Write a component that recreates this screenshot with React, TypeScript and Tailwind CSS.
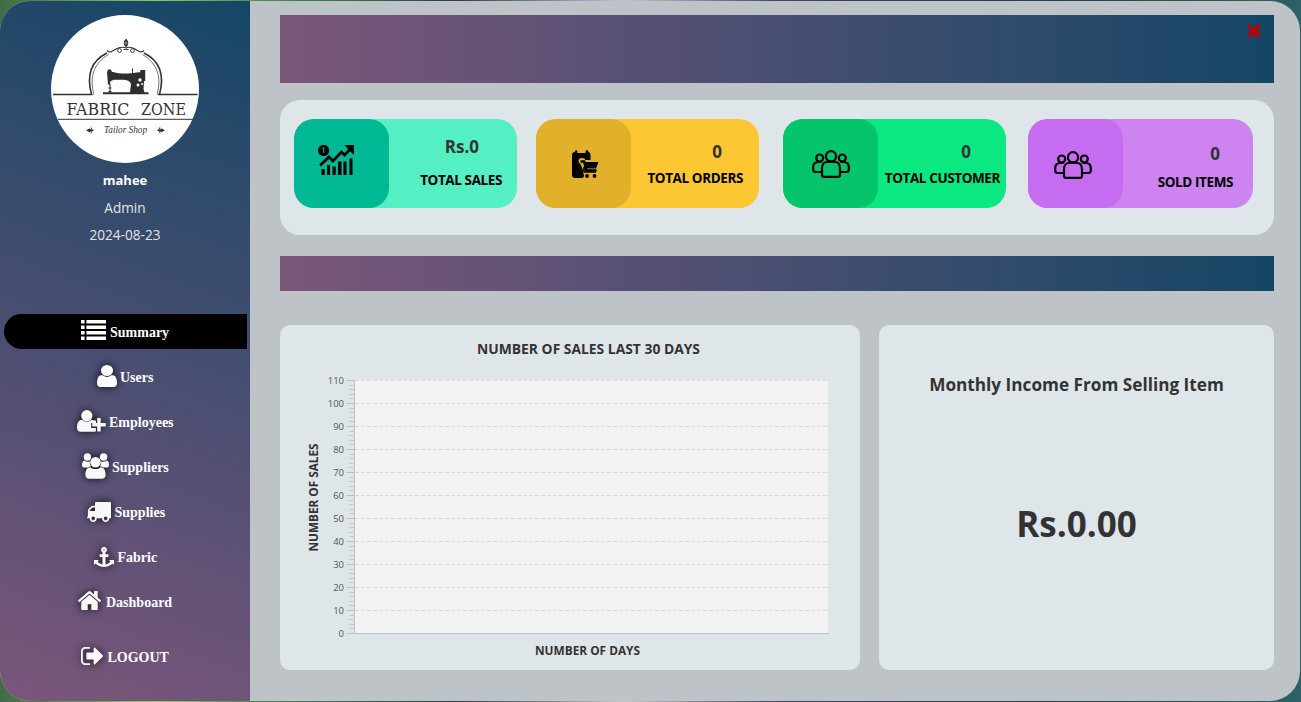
import React from "react";

const USER =
  "M1536 1399q0 109-62.5 187t-150.5 78h-854q-88 0-150.5-78t-62.5-187q0-85 8.5-160.5t31.5-152 58.5-131 94-89 134.5-34.5q131 128 313 128t313-128q76 0 134.5 34.5t94 89 58.5 131 31.5 152 8.5 160.5zm-256-887q0 159-112.5 271.5t-271.5 112.5-271.5-112.5-112.5-271.5 112.5-271.5 271.5-112.5 271.5 112.5 112.5 271.5z";
const ANCHOR =
  "M960 256q0-26-19-45t-45-19-45 19-19 45 19 45 45 19 45-19 19-45zm800 928v352q0 22-20 30-8 2-12 2-13 0-23-9l-93-93q-119 143-318.5 226.5t-397.5 83.5-397.5-83.5-318.5-226.500l-93 93q-9 9-23 9-4 0-12-2-20-8-20-30v-352q0-14 9-23t23-9h352q22 0 30 20 8 19-7 35l-100 100q67 91 189.5 153.500t239.500 82.500v-647h-192q-26 0-45-19t-19-45v-128q0-26 19-45t45-19h192v-163q-58-34-93-92.500t-35-128.500q0-106 75-181t181-75 181 75 75 181q0 70-35 128.500t-93 92.500v163h192q26 0 45 19t19 45v128q0 26-19 45t-45 19h-192v647q149-20 239.500-82.500t189.500-153.500l-100-100q-15-16-7-35 8-20 30-20h352q14 0 23 9t9 23z";
const HOME =
  "M1472 992v480q0 26-19 45t-45 19h-384v-384h-256v384h-384q-26 0-45-19t-19-45v-480q0-1 .5-3t.5-3l575-474 575 474q1 2 1 6zm223-69l-62 74q-8 9-21 11h-3q-13 0-21-7l-692-577-692 577q-12 8-24 7-13-2-21-11l-62-74q-8-10-7-23.500t11-21.500l719-599q32-26 76-26t76 26l244 204v-195q0-14 9-23t23-9h192q14 0 23 9t9 23v408l219 182q10 8 11 21.500t-7 23.500z";
const LOGOUT =
  "M704 1440q0 4 1 20t.5 26.5-3 23.5-10 19.500-20.500 6.500h-320q-119 0-203.500-84.500t-84.500-203.500v-704q0-119 84.500-203.500t203.500-84.500h320q13 0 22.500 9.500t9.500 22.500q0 4 1 20t.5 26.500-3 23.500-10 19.500-20.500 6.500h-320q-66 0-113 47t-47 113v704q0 66 47 113t113 47h312l11.500 1 11.500 3 8 5.500 7 9 2 13.500zm928-544q0 26-19 45l-544 544q-19 19-45 19t-45-19-19-45v-288h-448q-26 0-45-19t-19-45v-384q0-26 19-45t45-19h448v-288q0-26 19-45t45-19 45 19l544 544q19 19 19 45z";
const TRUCK =
  "M640 1408q0-52-38-90t-90-38-90 38-38 90 38 90 90 38 90-38 38-90zm-384-512h384v-256h-158q-13 0-22 9l-195 195q-9 9-9 22v30zm1280 512q0-52-38-90t-90-38-90 38-38 90 38 90 90 38 90-38 38-90zm256-1088v1024q0 15-4 26.500t-13.500 18.500-16.500 11.500-23.500 6-22.500 2-25.500 0-22.500-.5q0 106-75 181t-181 75-181-75-75-181h-384q0 106-75 181t-181 75-181-75-75-181h-64q-3 0-22.500.5t-25.500 0-22.500-2-23.500-6-16.500-11.500-13.500-18.500-4-26.500q0-26 19-45t45-19v-320q0-8-.5-35t0-38 2.500-34.500 6.500-37 14-30.500 22.500-30l198-198q19-19 50.500-32t58.500-13h160v-192q0-26 19-45t45-19h1024q26 0 45 19t19 45z";

const shadow = "block shrink-0 overflow-visible drop-shadow-[0_0_4px_rgba(0,0,0,0.85)]";

function SummaryIcon() {
  return (
    <svg className="block shrink-0" width="25" height="20" fill="#fff">
      {[0, 5.5, 11, 16.5].map((y) => (
        <g key={y}>
          <rect x="0" y={y} width="3.6" height="3.5" />
          <rect x="5.4" y={y} width="19.600" height="3.5" />
        </g>
      ))}
    </svg>
  );
}

function UsersIcon() {
  return (
    <svg className={shadow} width="20" height="22" viewBox="256 128 1280 1536" preserveAspectRatio="none" fill="#fff">
      <path d={USER} />
    </svg>
  );
}

function EmployeesIcon() {
  return (
    <svg className={shadow} width="29" height="22" viewBox="0 0 29 22" fill="#f8f8f8">
      <circle cx="9.8" cy="5.7" r="5.6" />
      <path d="M5 9.700c3 2.500 6.600 2.500 9.600 0 1 0 1.800.3 2.500.8h1.900v2.600h-4.800v5h4.700v3.200c-.5.3-1 .4-1.700.4H3.800C1.500 21.700 0 20.200 0 17.900c0-4 1.200-8.200 5-8.200z" />
      <path d="M20.200 8h3.500v5h5.100v3.500h-5.100v5h-3.500v-5h-5V13h5z" />
    </svg>
  );
}

function SuppliersIcon() {
  return (
    <svg className={shadow} width="27" height="26" viewBox="0 0 27 26" fill="#f8f8f8">
      <circle cx="5.400" cy="4" r="3.700" />
      <circle cx="21.600" cy="4" r="3.700" />
      <path d="M2.300 7.500c1.800 1.500 4 1.600 5.600.7-.3 2.100.2 3.700 1.200 5.100-1.300.1-2.500.5-3.400 1.300H2.600C1 14.600 0 13.800 0 12.300c0-2 .5-4.600 2.300-4.800z" />
      <path d="M24.700 7.500c-1.800 1.500-4 1.600-5.600.7.3 2.100-.2 3.700-1.200 5.100 1.300.1 2.500.5 3.400 1.300h3.100c1.600 0 2.600-.8 2.600-2.300 0-2-.5-4.600-2.300-4.800z" />
      <circle cx="13.500" cy="9.200" r="5.300" />
      <path d="M8.400 14.200c3 2.500 7.200 2.500 10.200 0 4 0 5 4 5 7.700 0 2.300-1.500 3.900-3.800 3.900H7.200c-2.300 0-3.800-1.600-3.800-3.900 0-3.700 1-7.700 5-7.700z" />
    </svg>
  );
}

function SuppliesIcon() {
  return (
    <svg className={shadow} width="24" height="20" viewBox="64 256 1728 1408" preserveAspectRatio="none" fill="#f8f8f8">
      <path d={TRUCK} />
    </svg>
  );
}

function FabricIcon() {
  return (
    <svg className={shadow} width="20" height="20" viewBox="32 0 1728 1776" preserveAspectRatio="none" fill="#f8f8f8">
      <path d={ANCHOR} />
    </svg>
  );
}

function HomeIcon() {
  return (
    <svg className={shadow} width="23" height="19" viewBox="89 250 1614 1286" preserveAspectRatio="none" fill="#f8f8f8">
      <path d={HOME} />
    </svg>
  );
}

function LogoutIcon() {
  return (
    <svg className={shadow} width="22" height="18" viewBox="64 256 1568 1280" preserveAspectRatio="none" fill="#f8f8f8">
      <path d={LOGOUT} />
    </svg>
  );
}

function Logo() {
  return (
    <svg className="block" width="148" height="148" viewBox="0 0 148 148">
      <circle cx="74" cy="74" r="74" fill="#fff" />
      <g fill="none" stroke="#333">
        <path d="M2 79.500h39.500M107 79.500H146.500" strokeWidth="1.300" />
        <path d="M7 104.300h135" strokeWidth="1" />
        <path d="M40.500 79.500C35.500 61 40 46 56 38M108.500 79.500C113.500 61 109 46 93 38" strokeWidth="1.600" />
        <path d="M43 79.500C38 62 43 48 57.500 39.500M106 79.500C111 62 106 48 91.500 39.500" strokeWidth=".7" />
        <path d="M56 35.500c4 4 7-1.500 12-2.800 4-1 7 .3 7 .3s2-1.300 6-.3c5 1.300 8 6.800 12 2.800" strokeWidth="1.100" />
        <circle cx="68.500" cy="35.500" r="1.900" strokeWidth="1" />
        <circle cx="81.500" cy="35.500" r="1.900" strokeWidth="1" />
        <path d="M75 24.500c-3 3-2 5 0 7 2-2 3-4 0-7zM75 26v6M72.500 34.500h5" strokeWidth="1.200" />
        <path d="M81.500 53.500v5M59 69v9M57.500 73h3M57.500 76.500h3" strokeWidth="1.100" />
      </g>
      <path
        fill="#2e2e2e"
        d="M52 77.300h27l1-8.300c-1-3-4-4.200-8-4.200H63c-1.500 0-2 1.300-3.500 1.300l-.5 3.500h-2l-1-12 1-3.200h3l.8 2.300c8 2.500 17 2.300 24.500.8l3.700-.3.500-2.200h4.700v11h-1.200l-.5 8 1 3.300H97.500v2H52z"
      />
      <circle cx="89" cy="65" r="1.700" fill="#fff" />
      <circle cx="87" cy="70" r="1.500" fill="#fff" />
      <circle cx="91" cy="69" r="1" fill="#fff" />
      <g fill="#333" fontSize="17.500" className="font-['DejaVu_Serif',serif]">
        <text x="15.500" y="100" textLength="63" lengthAdjust="spacingAndGlyphs">
          FABRIC
        </text>
        <text x="90" y="100" textLength="45" lengthAdjust="spacingAndGlyphs">
          ZONE
        </text>
      </g>
      <text
        x="53"
        y="117.500"
        textLength="43"
        lengthAdjust="spacingAndGlyphs"
        fill="#333"
        fontSize="9.500"
        className="font-['Liberation_Serif',serif] italic"
      >
        Tailor Shop
      </text>
      <g fill="#333">
        <path d="M35 115.300l4-2 1 1.500h2.500v1.200H40l-1 1.500zM39.500 111l2.500 4-2.500 4.500 1-4.500z" />
        <path d="M114 115.300l-4-2-1 1.500h-2.500v1.200h2.500l1 1.500zM109.500 111l-2.500 4 2.500 4.500-1-4.500z" />
      </g>
    </svg>
  );
}

function SalesIcon() {
  return (
    <svg className="block" width="36" height="32" viewBox="0 0 36 32">
      <circle cx="5.600" cy="5.500" r="5.600" />
      <path d="M4.500 4l1.300-.9V8" stroke="#00b894" strokeWidth="1.100" fill="none" />
      <path d="M2 20.500l9-8.500 4 4 8.500-9 3 3L33 3.500" fill="none" stroke="#000" strokeWidth="2.800" />
      <path d="M26.500 0H36v10l-3-3-3.500-3.500z" />
      <path d="M3.500 24h3.200v6H3.500zM9 20h3v10H9zM14.500 21.500h3.200V30h-3.200zM20 16.500h3.500V30H20zM25.500 16.500h3V30h-3zM31.500 13.500h3V30h-3z" />
    </svg>
  );
}

function OrdersIcon() {
  return (
    <svg className="block" width="27" height="29" viewBox="0 0 27 29">
      <path d="M0 5Q0 2 3 2Q3 0 4.200 0Q5.500 0 5.500 3h8Q13.500 0 15 0Q16 0 16.500 2Q18.500 2.500 18.500 5v5h-5Q13 8 10 8Q6.500 8 6.500 11Q6.500 13 8.500 14L11 20v3l1 1.500Q12 28 10 28H3Q0 28 0 25z" />
      <path d="M9.500 11.500h2.600l2.300 9h9.200" stroke="#000" strokeWidth="2.500" fill="none" strokeLinecap="round" />
      <path d="M12.500 12H26.500l-2.500 6.500h-9.700z" />
      <path d="M12 17v5h12" stroke="#000" strokeWidth="1.600" fill="none" />
      <circle cx="15" cy="26" r="1.900" />
      <circle cx="22.500" cy="26" r="1.900" />
    </svg>
  );
}

function PeopleIcon() {
  return (
    <svg className="block" width="38" height="28" viewBox="0 0 38 28" fill="none" stroke="#000" strokeWidth="2.200">
      <circle cx="19" cy="6.300" r="5.100" />
      <circle cx="7.700" cy="8" r="3.500" />
      <circle cx="30.300" cy="8" r="3.500" />
      <path d="M10 24.500v-6q0-6.500 5-6.500h8q5 0 5 6.500v6q0 2.400-2 2.400H12q-2 0-2-2.400z" />
      <path d="M9.500 12H6.500Q1.200 12 1.200 17V19.500q0 2.500 2.500 2.500h6M28.500 12h3Q36.800 12 36.800 17V19.500q0 2.500-2.500 2.500h-6" />
    </svg>
  );
}

const nav = [
  { label: "Summary", icon: <SummaryIcon />, item: "bg-black gap-1 pr-px", pad: "pb-[3px]", text: "w-[59px]" },
  { label: "Users", icon: <UsersIcon />, item: "gap-[3px]", pad: "pb-[2px]", text: "w-[34px]" },
  { label: "Employees", icon: <EmployeesIcon />, item: "gap-[3px]", pad: "pb-[2px]", text: "w-[65px]" },
  { label: "Suppliers", icon: <SuppliersIcon />, item: "gap-[3px]", pad: "pb-[2px]", text: "w-[57px]" },
  { label: "Supplies", icon: <SuppliesIcon />, item: "gap-1 pl-px", pad: "pb-0", text: "w-[51px]" },
  { label: "Fabric", icon: <FabricIcon />, item: "gap-1", pad: "pb-0", text: "w-[40px]" },
  { label: "Dashboard", icon: <HomeIcon />, item: "gap-[5px]", pad: "pb-[2px]", text: "w-[67px]" },
];

function Sidebar() {
  return (
    <aside className="flex w-[250px] shrink-0 flex-col bg-[linear-gradient(19.65deg,#7b567b,#154666)] pt-[14px] text-white">
      <div className="flex justify-center">
        <Logo />
      </div>
      <div className="mt-1 text-center text-[13.600px] leading-[27px]">
        <div className="text-[13px] font-bold">mahee</div>
        <div className="text-[#e4e4e4]">Admin</div>
        <div className="text-[#e4e4e4]">2024-08-23</div>
      </div>
      <nav className="mt-[66px] flex flex-col gap-2.5 pr-[3px] pl-1 font-['Liberation_Serif',serif] text-[14px] font-bold">
        {nav.map((n) => (
          <div key={n.label} className={"flex h-[35px] items-center justify-center rounded-l-[18px] " + n.item}>
            <span className={n.pad}>{n.icon}</span>
            <span className={"pt-[2px] whitespace-nowrap " + n.text}>{n.label}</span>
          </div>
        ))}
        <div className="mt-2.5 flex h-[35px] items-center justify-center gap-[5px] pr-px">
          <span className="pb-[2px]">
            <LogoutIcon />
          </span>
          <span className="w-[62px] pt-[2px]">LOGOUT</span>
        </div>
      </nav>
    </aside>
  );
}

interface StatProps {
  card: string;
  tile: string;
  icon: React.ReactNode;
  value: string;
  label: string;
  valueClass: string;
  labelClass: string;
}

function Stat({ card, tile, icon, value, label, valueClass, labelClass }: StatProps) {
  return (
    <div className={"flex h-[89px] rounded-[20px] " + card}>
      <div className={"h-full w-[95px] shrink-0 rounded-[20px] " + tile}>{icon}</div>
      <div className="flex flex-1 flex-col items-end font-bold whitespace-nowrap">
        <div className={"text-[17px] leading-5 text-[#333] " + valueClass}>{value}</div>
        <div className={"text-[13.500px] leading-[18px] tracking-[-0.4px] text-black " + labelClass}>{label}</div>
      </div>
    </div>
  );
}

function SalesChart() {
  const majors = Array.from({ length: 12 }, (_, i) => i);
  const minors = Array.from({ length: 56 }, (_, i) => i).filter((i) => i % 5 !== 0);
  return (
    <svg className="block" width="580" height="345" fontFamily="'Open Sans', 'Noto Sans', sans-serif">
      <text x="197" y="29" fontSize="14" fontWeight="700" fill="#333" textLength="223" lengthAdjust="spacingAndGlyphs">
        NUMBER OF SALES LAST 30 DAYS
      </text>
      <rect x="75" y="55" width="473" height="253" fill="#f3f3f3" />
      {majors.map((i) => {
        const y = 308.5 - i * 23;
        return (
          <g key={i}>
            {i > 0 && <path d={`M75 ${y}H547`} stroke="#dadada" strokeDasharray="4 2" />}
            <path d={`M66 ${y}h8`} stroke="#bdc1c4" />
            <text x="64" y={y + 3.5} fontSize="9.500" textAnchor="end" fill="#555">
              {i * 10}
            </text>
          </g>
        );
      })}
      {minors.map((i) => (
        <path key={i} d={`M69 ${Math.round(308 - i * 4.6) + 0.5}h5`} stroke="#c9cccf" />
      ))}
      <path d="M74.500 55v253.500H549" fill="none" stroke="#bdc1c4" />
      <text
        transform="translate(38 226.500) rotate(-90)"
        fontSize="12"
        fontWeight="700"
        fill="#333"
        textLength="108"
        lengthAdjust="spacingAndGlyphs"
      >
        NUMBER OF SALES
      </text>
      <text x="255" y="330" fontSize="12" fontWeight="700" fill="#333" textLength="105" lengthAdjust="spacingAndGlyphs">
        NUMBER OF DAYS
      </text>
    </svg>
  );
}

export default function App() {
  return (
    <div className="h-[702px] w-[1301px] overflow-hidden bg-[linear-gradient(to_right,#426b48,#8cc866_12%,#4d8c55_20%,#25404c_35%,#c8c4cc_48%,#35485e_60%,#25404c_80%,#2c6265)] pt-px font-['Open_Sans','Noto_Sans',sans-serif]">
      <div className="flex h-[700px] w-[1300px] overflow-hidden rounded-[30px] bg-[#bdc3c7]">
        <Sidebar />
        <main className="flex flex-1 flex-col pt-[14px] pr-[26px] pl-[30px]">
          <header className="flex h-[68px] justify-end bg-[linear-gradient(to_right,#7b567b,#154666)] pt-[9px] pr-[13px]">
            <svg width="14" height="14" viewBox="0 0 14 14">
              <path d="M2.500 2.500l9 9M11.500 2.500l-9 9" stroke="#b90000" strokeWidth="4" strokeLinecap="round" />
            </svg>
          </header>
          <section className="mt-[17px] flex h-[135px] rounded-[20px] bg-[#dfe6e9] pt-[19px] pl-[14px]">
            <Stat
              card="w-[223px] bg-[#55efc4]"
              tile="bg-[#00b894] pt-[26px] pl-[24px]"
              icon={<SalesIcon />}
              value="Rs.0"
              label="TOTAL SALES"
              valueClass="mt-[18px] pr-[38px]"
              labelClass="mt-[14px] pr-[15px]"
            />
            <Stat
              card="ml-[19px] w-[223px] bg-[#fdc733]"
              tile="bg-[#e1b12c] pt-[31px] pl-[36px]"
              icon={<OrdersIcon />}
              value="0"
              label="TOTAL ORDERS"
              valueClass="mt-[23px] pr-[37px]"
              labelClass="mt-[7px] pr-4"
            />
            <Stat
              card="ml-6 w-[223px] bg-[#0be881]"
              tile="bg-[#05c46b] pt-[31px] pl-[29px]"
              icon={<PeopleIcon />}
              value="0"
              label="TOTAL CUSTOMER"
              valueClass="mt-[23px] pr-[35px]"
              labelClass="mt-[7px] pr-[6px]"
            />
            <Stat
              card="ml-[22px] w-[225px] bg-[#cd84f1]"
              tile="bg-[#c56cf0] pt-8 pl-[26px]"
              icon={<PeopleIcon />}
              value="0"
              label="SOLD ITEMS"
              valueClass="mt-[25px] pr-[33px]"
              labelClass="mt-[9px] pr-[20px]"
            />
          </section>
          <div className="mt-[21px] h-[35px] shrink-0 bg-[linear-gradient(to_right,#7b567b,#154666)]" />
          <div className="mt-[34px] flex h-[345px] gap-[19px]">
            <section className="w-[580px] rounded-[10px] bg-[#dfe6e9]">
              <SalesChart />
            </section>
            <section className="flex flex-1 flex-col items-center rounded-[10px] bg-[#dfe6e9] font-bold text-[#333]">
              <h2 className="mt-[47px] text-[17.200px] leading-[26px] whitespace-nowrap">
                Monthly Income From Selling Item
              </h2>
              <div className="mt-[100px] text-[35px] leading-[52px]">Rs.0.00</div>
            </section>
          </div>
        </main>
      </div>
    </div>
  );
}
